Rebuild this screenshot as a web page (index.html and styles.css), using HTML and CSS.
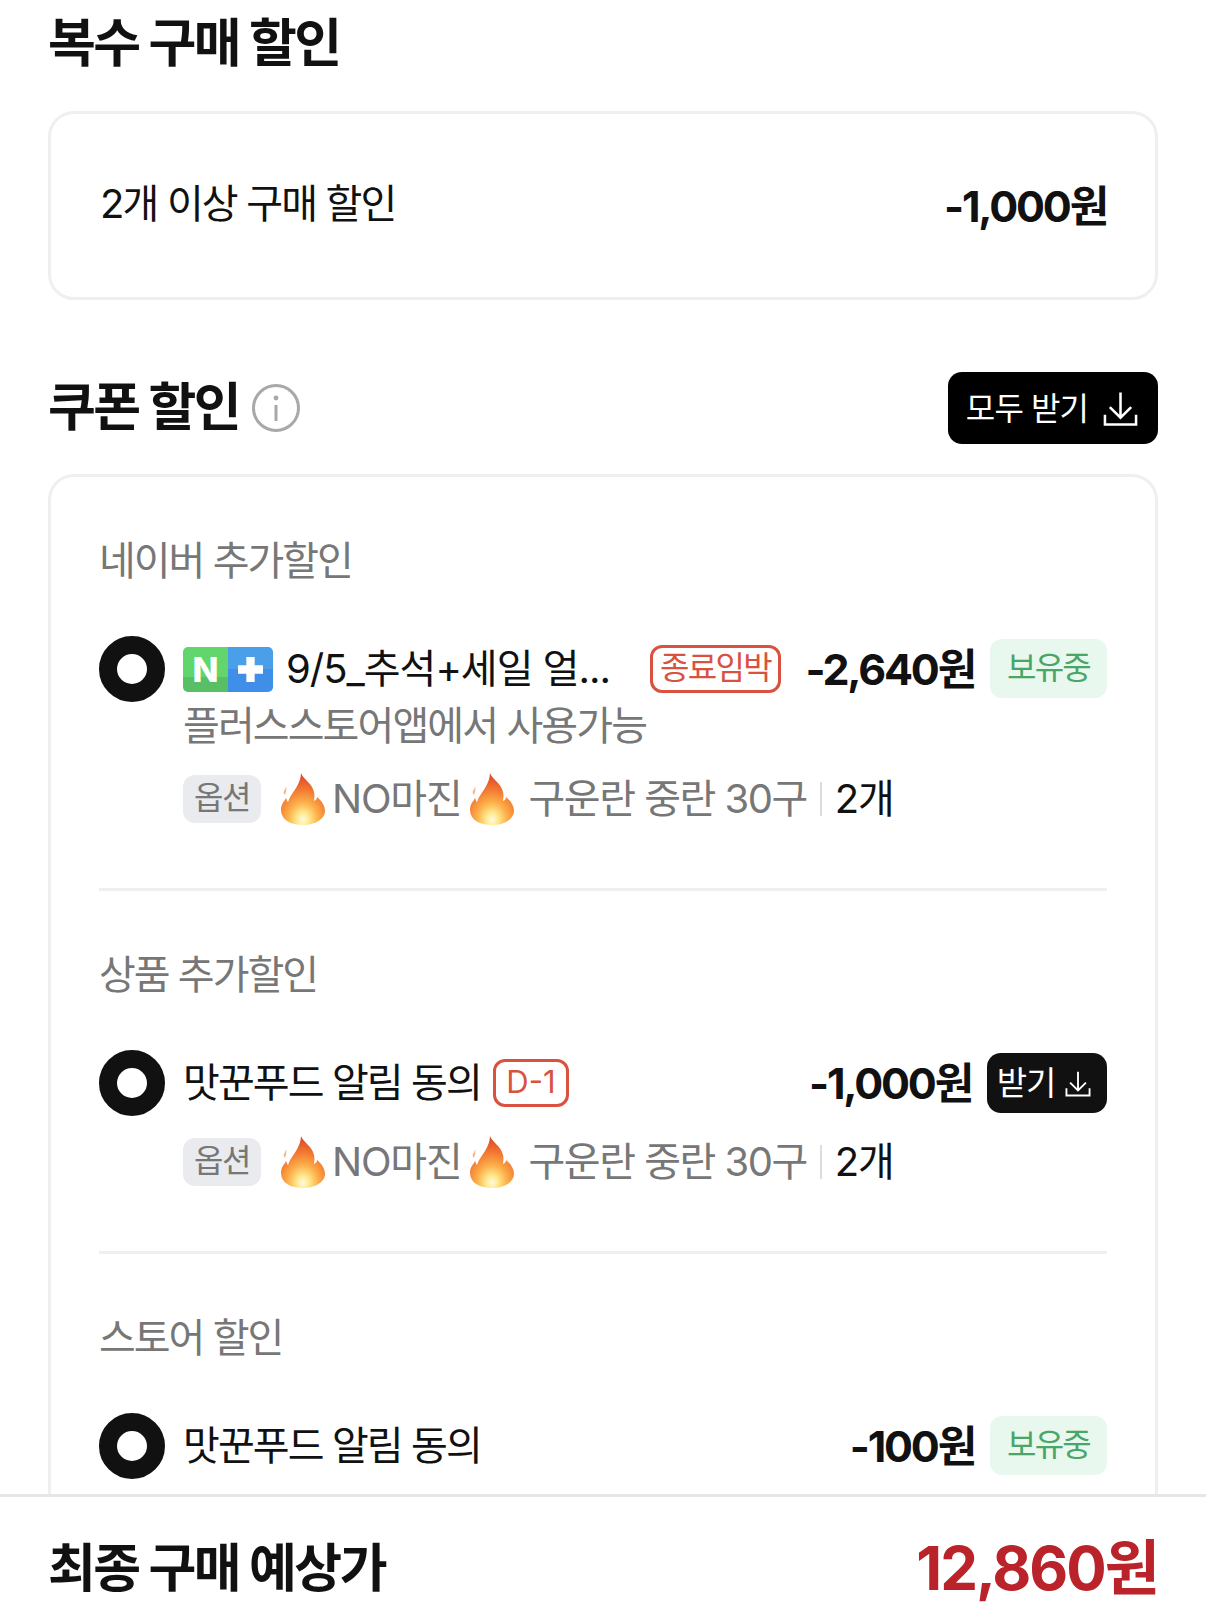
FILE: index.html
```html
<!DOCTYPE html>
<html lang="ko">
<head>
<meta charset="utf-8">
<title>할인</title>
<link rel="stylesheet" href="styles.css">
</head>
<body>
<svg class="defs" width="0" height="0" aria-hidden="true">
  <defs>
    <radialGradient id="fireGrad" cx="50%" cy="90%" r="85%">
      <stop offset="0" stop-color="#fffbe2"/>
      <stop offset="0.16" stop-color="#ffe98f"/>
      <stop offset="0.4" stop-color="#fcb04a"/>
      <stop offset="0.68" stop-color="#f37a32"/>
      <stop offset="1" stop-color="#dd4a26"/>
    </radialGradient>
    <symbol id="fire" viewBox="0 0 44 52">
      <path fill="url(#fireGrad)" d="M20 0C22 6 31 10 33 19C34 23 33 26 33 28C35 27 36 26 36 24C41 28 44 33 44 38C44 46 34 52 22 52C10 52 0 47 0 37C0 31 3 29 5 25C6 27 6 28 7 29C9 23 12 20 15 15C18 10 20 5 20 0z"/>
      <path fill="#f4b486" d="M5 13c0 2-1 3-2 5-1 1 0 3 1 4 1-3 2-6 1-9z"/>
    </symbol>
    <symbol id="download" viewBox="0 0 36 36">
      <path fill="none" stroke="currentColor" stroke-width="2.6" d="M18 1v26M7 16l11 11 11-11M2 24v10h32V24"/>
    </symbol>
  </defs>
</svg>
<div class="app">
  <main class="content">
    <h2 class="title title-first">복수 구매 할인</h2>
    <section class="card card-bulk">
      <span class="bulk-label">2개 이상 구매 할인</span>
      <strong class="price">-1,000원</strong>
    </section>
    <div class="section-head">
      <div class="section-title">
        <h2 class="title">쿠폰 할인</h2>
        <svg class="info" viewBox="0 0 48 48" aria-hidden="true">
          <circle cx="24" cy="24" r="22.5" fill="none" stroke="#a8a8a8" stroke-width="3"/>
          <circle cx="24" cy="14" r="2.4" fill="#a8a8a8"/>
          <path d="M24 21v16" stroke="#a8a8a8" stroke-width="3"/>
        </svg>
      </div>
      <button class="btn-all"><span class="btn-label">모두 받기</span><svg class="icon-all"><use href="#download"/></svg></button>
    </div>
    <section class="card card-coupons">
      <div class="group">
        <h3 class="group-label">네이버 추가할인</h3>
        <div class="coupon">
          <span class="radio"></span>
          <div class="coupon-body">
            <div class="coupon-main">
              <span class="nplus"><span class="nplus-n">N</span><span class="nplus-p"><svg class="nplus-icon" viewBox="0 0 24 24" aria-hidden="true"><path fill="#fff" d="M8 0h8v8h8v8h-8v8H8v-8H0V8h8z"/></svg></span></span>
              <span class="coupon-name name-long">9/5_추석+세일 얼...</span>
              <span class="tag tag-wide">종료임박</span>
              <strong class="price coupon-price">-2,640원</strong>
              <span class="owned">보유중</span>
            </div>
            <p class="coupon-sub">플러스스토어앱에서 사용가능</p>
            <div class="option">
              <span class="chip">옵션</span>
              <svg class="flame flame-a"><use href="#fire"/></svg>
              <span class="opt-text">NO마진</span>
              <svg class="flame flame-b"><use href="#fire"/></svg>
              <span class="opt-text opt-desc">구운란 중란 30구</span>
              <span class="opt-sep"></span>
              <span class="opt-text opt-qty">2개</span>
            </div>
          </div>
        </div>
      </div>
      <div class="group">
        <h3 class="group-label">상품 추가할인</h3>
        <div class="coupon">
          <span class="radio"></span>
          <div class="coupon-body">
            <div class="coupon-main">
              <span class="coupon-name">맛꾼푸드 알림 동의</span>
              <span class="tag tag-short">D-1</span>
              <strong class="price coupon-price">-1,000원</strong>
              <button class="btn-get"><span class="btn-label">받기</span><svg class="icon-get"><use href="#download"/></svg></button>
            </div>
            <div class="option option-close">
              <span class="chip">옵션</span>
              <svg class="flame flame-a"><use href="#fire"/></svg>
              <span class="opt-text">NO마진</span>
              <svg class="flame flame-b"><use href="#fire"/></svg>
              <span class="opt-text opt-desc">구운란 중란 30구</span>
              <span class="opt-sep"></span>
              <span class="opt-text opt-qty">2개</span>
            </div>
          </div>
        </div>
      </div>
      <div class="group group-last">
        <h3 class="group-label">스토어 할인</h3>
        <div class="coupon">
          <span class="radio"></span>
          <div class="coupon-body">
            <div class="coupon-main">
              <span class="coupon-name">맛꾼푸드 알림 동의</span>
              <strong class="price coupon-price">-100원</strong>
              <span class="owned">보유중</span>
            </div>
          </div>
        </div>
      </div>
    </section>
  </main>
  <footer class="footer">
    <h2 class="title">최종 구매 예상가</h2>
    <strong class="total">12,860원</strong>
  </footer>
</div>
</body>
</html>
```
FILE: styles.css
```css
* { box-sizing: border-box; }
html, body { margin: 0; padding: 0; background: #fff; }
body {
  font-family: Inter, "Noto Sans CJK KR", sans-serif;
  color: #111;
  overflow: hidden;
}
.defs { position: absolute; }
.app { height: 1616px; display: flex; flex-direction: column; overflow: hidden; }
.content { flex: 1; min-height: 0; overflow: hidden; padding: 0 48px; }
.title {
  margin: 0;
  font-size: 52px;
  line-height: 72px;
  font-weight: 700;
  letter-spacing: -2.5px;
  white-space: nowrap;
}
.title-first { margin-top: 8px; }
.card {
  border: 3px solid #eeeff0;
  border-radius: 26px;
  background: #fff;
}
.card-bulk {
  margin-top: 31px;
  height: 189px;
  padding: 0 48px 0 49px;
  display: flex;
  align-items: center;
  justify-content: space-between;
}
.bulk-label { font-size: 40px; letter-spacing: -1.85px; line-height: 56px; margin-top: -4px; }
.price { font-size: 43px; font-weight: 700; letter-spacing: -2.2px; line-height: 56px; white-space: nowrap; }
.section-head {
  margin-top: 72px;
  height: 72px;
  display: flex;
  align-items: center;
  justify-content: space-between;
}
.section-title { display: flex; align-items: center; gap: 13px; }
.section-title .title { margin-top: -1px; }
.info { width: 48px; height: 48px; }
.btn-all {
  width: 210px;
  height: 72px;
  border: 0;
  border-radius: 14px;
  background: #000;
  color: #fff;
  font: inherit;
  font-size: 32px;
  letter-spacing: -0.9px;
  display: flex;
  align-items: center;
  justify-content: center;
  gap: 15px;
  padding: 0 2px 0 0;
}
.btn-label { margin-top: -4px; }
.icon-all { width: 35px; height: 36px; margin-top: 2px; }
.card-coupons {
  margin-top: 30px;
  padding: 56px 48px 0;
}
.group { border-bottom: 3px solid #eeeff0; padding-bottom: 59px; margin-bottom: 56px; }
.group-last { border-bottom: 0; }
.group-label {
  margin: 0;
  font-size: 40px;
  line-height: 56px;
  font-weight: 400;
  letter-spacing: -2px;
  color: #777;
}
.coupon { display: flex; gap: 18px; margin-top: 47px; }
.radio {
  flex: none;
  width: 66px;
  height: 66px;
  border: 18px solid #111;
  border-radius: 50%;
}
.coupon-body { flex: 1; min-width: 0; }
.coupon-main { display: flex; align-items: center; height: 66px; }
.nplus {
  flex: none;
  width: 90px;
  height: 45px;
  border-radius: 5px;
  overflow: hidden;
  display: flex;
  margin-right: 13px;
  color: #fff;
  font-weight: 800;
  font-size: 34px;
  line-height: 45px;
  text-align: center;
}
.nplus-n { width: 45px; background: linear-gradient(#62d56c 0 66%, #58bf66 66%); }
.nplus-p {
  width: 45px;
  display: flex;
  align-items: center;
  justify-content: center;
  background: linear-gradient(#4a9fe8 0 50%, #3f8ee8 50%);
}
.nplus-icon { width: 25px; height: 25px; }
.coupon-name { font-size: 40px; letter-spacing: -1.9px; white-space: nowrap; line-height: 56px; }
.name-long { letter-spacing: -1px; }
.tag {
  flex: none;
  border: 3px solid #d9523f;
  border-radius: 12px;
  color: #d9523f;
  height: 48px;
  line-height: 40px;
  text-align: center;
  font-size: 32px;
  letter-spacing: -1.7px;
}
.tag-wide { width: 131px; margin-left: 40px; }
.tag-short { width: 76px; margin-left: 12px; font-size: 31px; letter-spacing: 0; }
.coupon-price { margin-left: auto; }
.owned {
  flex: none;
  width: 117px;
  height: 59px;
  margin-left: 15px;
  margin-top: -2px;
  border-radius: 12px;
  background: #e9f8ee;
  color: #4aa568;
  font-size: 32px;
  line-height: 57px;
  letter-spacing: -1.8px;
  text-align: center;
}
.btn-get {
  flex: none;
  width: 120px;
  height: 60px;
  margin-left: 15px;
  border: 0;
  border-radius: 14px;
  background: #111;
  color: #fff;
  font: inherit;
  font-size: 33px;
  letter-spacing: -1px;
  padding: 0 6px 0 0;
  display: flex;
  align-items: center;
  justify-content: center;
  gap: 10px;
}
.icon-get { width: 26px; height: 26px; margin-top: 2px; }
.coupon-sub {
  margin: 0;
  font-size: 40px;
  line-height: 50px;
  letter-spacing: -1.9px;
  color: #777;
  white-space: nowrap;
  margin-top: -1px;
}
.option {
  display: flex;
  align-items: center;
  height: 60px;
  margin-top: 18px;
  color: #777;
  font-size: 40px;
  letter-spacing: -1.2px;
  white-space: nowrap;
}
.option-close { margin-top: 16px; }
.opt-text { padding-bottom: 6px; }
.opt-desc { letter-spacing: -1.5px; }
.chip {
  flex: none;
  width: 78px;
  height: 48px;
  border-radius: 12px;
  background: #e9ebee;
  color: #777;
  font-size: 32px;
  line-height: 46px;
  letter-spacing: -1.5px;
  text-align: center;
  margin-right: 20px;
}
.flame { flex: none; width: 44px; height: 52px; }
.flame-a { margin-right: 7px; }
.flame-b { margin: 0 15px 0 8px; }
.opt-sep { flex: none; width: 2px; height: 34px; background: #ddd; margin: 0 13px; }
.opt-qty { color: #111; }
.footer {
  flex: none;
  height: 122px;
  border-top: 3px solid #e6e6e6;
  padding: 14px 48px 0;
  display: flex;
  align-items: center;
  justify-content: space-between;
  background: #fff;
}
.footer .title { margin-top: 10px; }
.total { font-size: 60px; font-weight: 700; letter-spacing: -2px; color: #b92329; white-space: nowrap; }
```
